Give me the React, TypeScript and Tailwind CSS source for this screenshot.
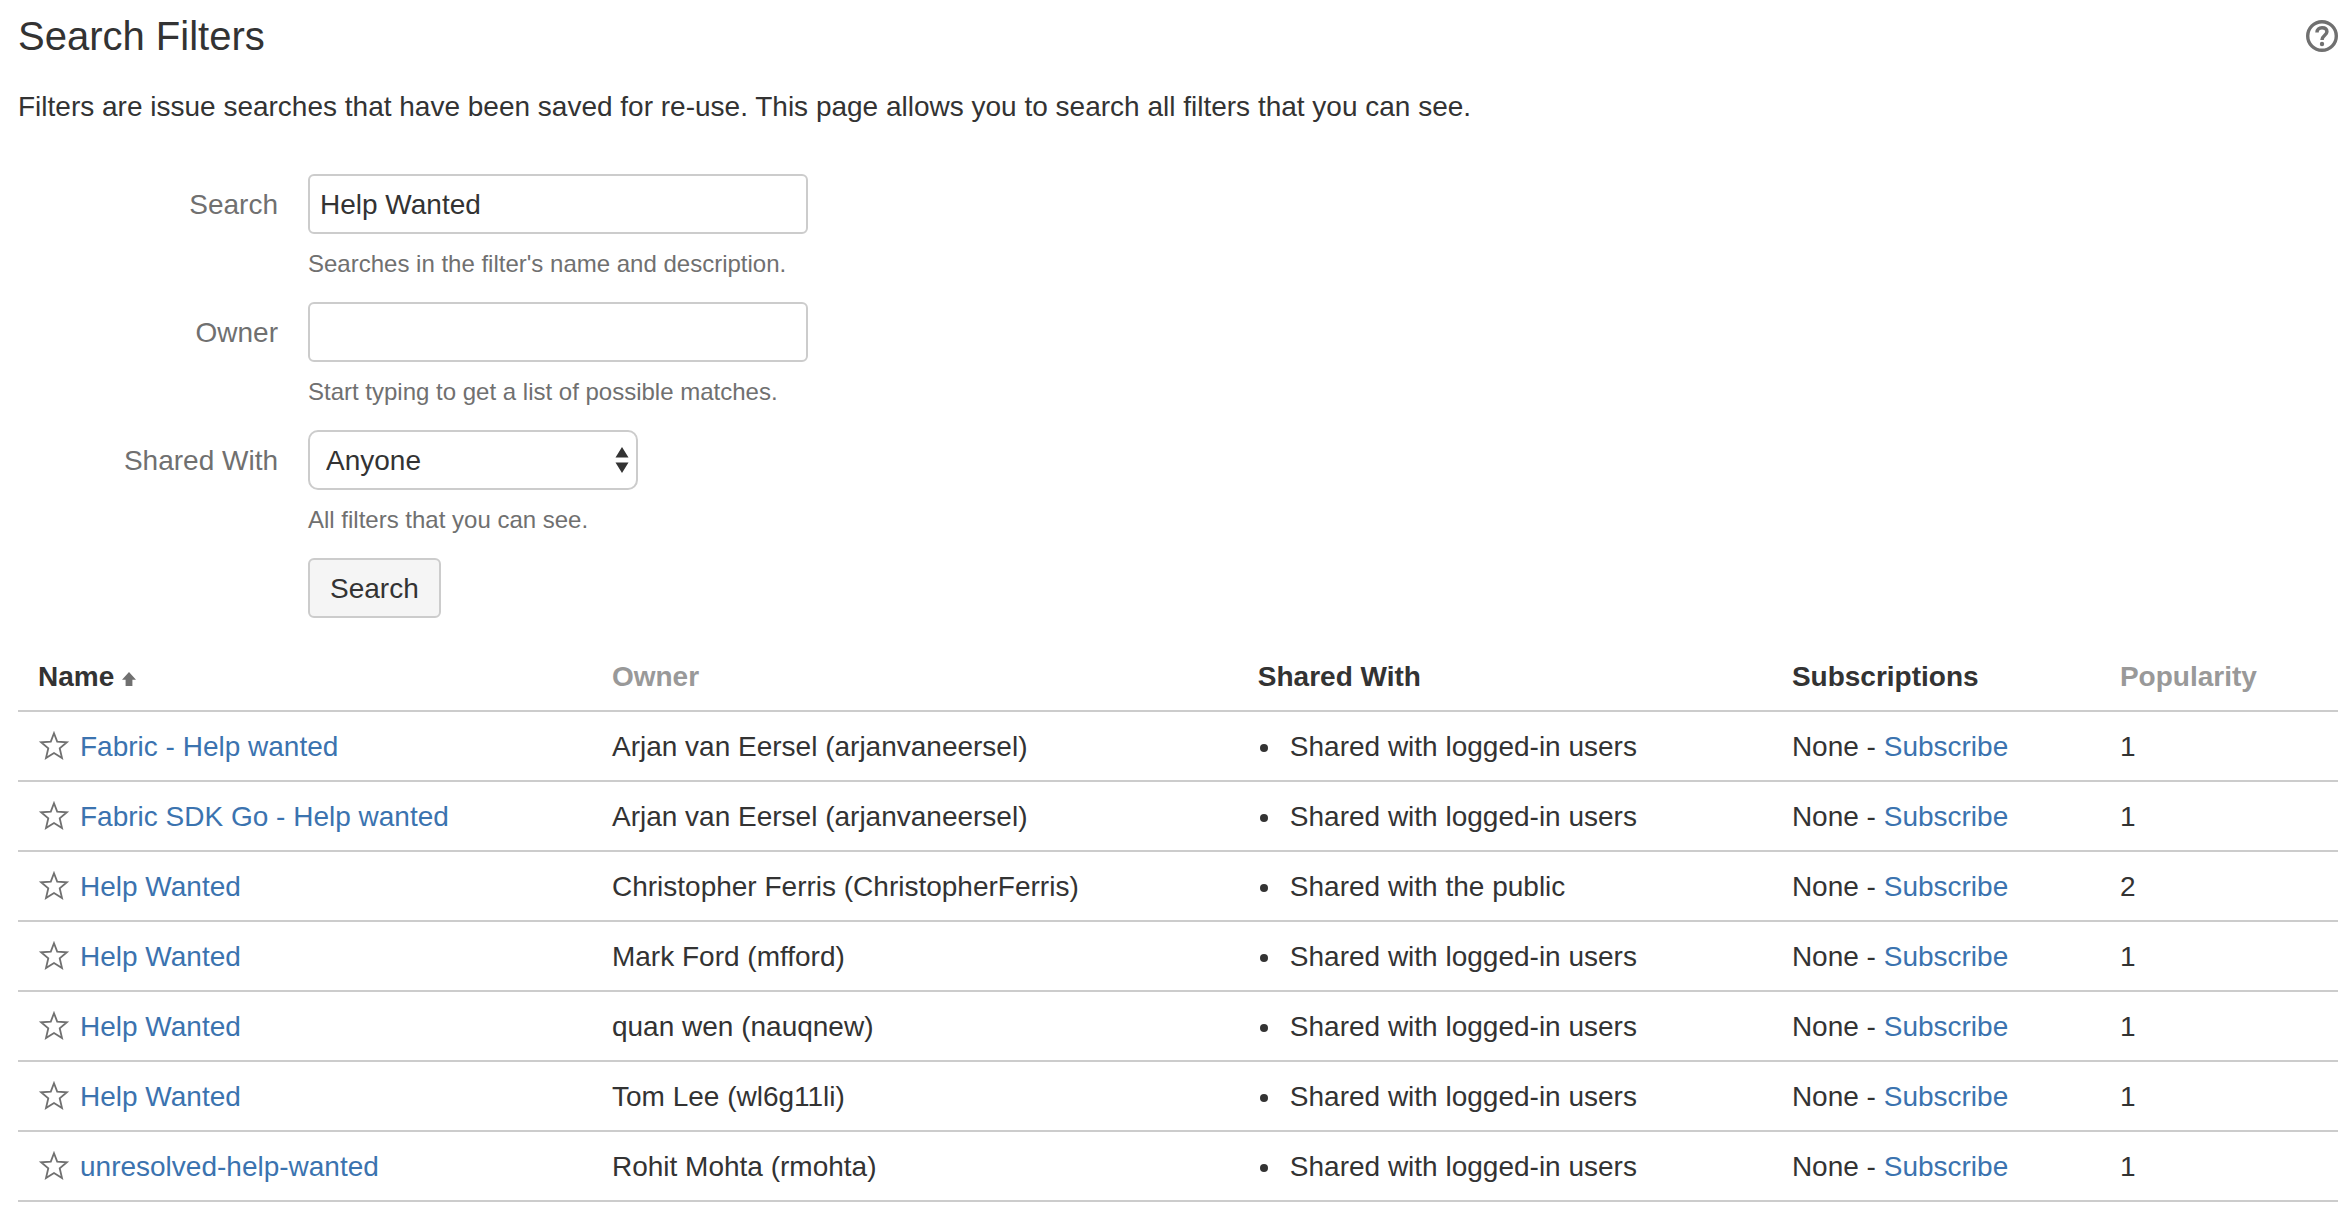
import { useState } from "react";
import type { ReactNode } from "react";

type Filter = {
  name: string;
  owner: string;
  shared: string;
  popularity: number;
};

const LOGGED_IN = "Shared with logged-in users";

const filters: Filter[] = [
  { name: "Fabric - Help wanted", owner: "Arjan van Eersel (arjanvaneersel)", shared: LOGGED_IN, popularity: 1 },
  { name: "Fabric SDK Go - Help wanted", owner: "Arjan van Eersel (arjanvaneersel)", shared: LOGGED_IN, popularity: 1 },
  { name: "Help Wanted", owner: "Christopher Ferris (ChristopherFerris)", shared: "Shared with the public", popularity: 2 },
  { name: "Help Wanted", owner: "Mark Ford (mfford)", shared: LOGGED_IN, popularity: 1 },
  { name: "Help Wanted", owner: "quan wen (nauqnew)", shared: LOGGED_IN, popularity: 1 },
  { name: "Help Wanted", owner: "Tom Lee (wl6g11li)", shared: LOGGED_IN, popularity: 1 },
  { name: "unresolved-help-wanted", owner: "Rohit Mohta (rmohta)", shared: LOGGED_IN, popularity: 1 },
];

function HelpIcon() {
  return (
    <svg viewBox="0 0 32 32" className="size-8" fill="none" stroke="#707070" aria-hidden="true">
      <circle cx="16" cy="16" r="14.3" strokeWidth="3.4" />
      <path d="M11 12.4C11 9.4 13 7.8 16 7.8C19 7.8 20.9 9.4 20.9 11.8C20.9 15.2 16 15.4 16 20" strokeWidth="3.5" />
      <circle cx="16" cy="24" r="2.2" fill="#707070" stroke="none" />
    </svg>
  );
}

function StarIcon() {
  return (
    <svg viewBox="0 0 32 32" className="size-8" fill="none" stroke="#707070" strokeWidth="1.8" aria-hidden="true">
      <path d="M16 2.2L19.2 10.6L28.9 11.3L21.7 17.3L24 27.1L16 22L8 27.1L10.3 17.3L3.1 11.3L12.8 10.6Z" />
    </svg>
  );
}

function SortUpIcon() {
  return (
    <svg viewBox="0 0 14 14" className="size-3.5" fill="#707070" aria-hidden="true">
      <path d="M7 0L14 7.7H10.4V14H3.6V7.7H0Z" />
    </svg>
  );
}

function Field({ id, label, hint, children }: { id: string; label: string; hint: string; children: ReactNode }) {
  return (
    <div className="mb-[18px] grid grid-cols-[260px_1fr] gap-x-[30px]">
      <label htmlFor={id} className="self-center pt-0.5 text-right text-[#707070]">
        {label}
      </label>
      <div className="flex">{children}</div>
      <p id={id + "-hint"} className="col-start-2 mt-2.5 text-2xl leading-10 text-[#707070]">
        {hint}
      </p>
    </div>
  );
}

export default function App() {
  const [query, setQuery] = useState("Help Wanted");
  const [owner, setOwner] = useState("");

  return (
    <main className="bg-white pt-3 pr-1.5 pb-6 pl-[18px] font-['Liberation_Sans',Arial,sans-serif] text-[28px] leading-10 text-[#333]">
      <header className="flex items-center justify-between">
        <h1 className="text-[40px] leading-[48px]">Search Filters</h1>
        <a href="#help" aria-label="Get help">
          <HelpIcon />
        </a>
      </header>
      <p className="mt-[27px]">
        Filters are issue searches that have been saved for re-use. This page allows you to search all filters that you
        can see.
      </p>

      <form className="mt-[47px]" onSubmit={(e) => e.preventDefault()}>
        <Field id="search-name" label="Search" hint="Searches in the filter's name and description.">
          <input
            id="search-name"
            aria-describedby="search-name-hint"
            value={query}
            onChange={(e) => setQuery(e.target.value)}
            className="h-15 w-full max-w-[500px] rounded-md border-2 border-[#ccc] px-2.5 pt-0.5"
          />
        </Field>
        <Field id="search-owner" label="Owner" hint="Start typing to get a list of possible matches.">
          <input
            id="search-owner"
            aria-describedby="search-owner-hint"
            value={owner}
            onChange={(e) => setOwner(e.target.value)}
            className="h-15 w-full max-w-[500px] rounded-md border-2 border-[#ccc] px-2.5 pt-0.5"
          />
        </Field>
        <Field id="search-share" label="Shared With" hint="All filters that you can see.">
          <div className="relative w-full max-w-[330px]">
            <select
              id="search-share"
              aria-describedby="search-share-hint"
              className="h-15 w-full appearance-none rounded-[10px] border-2 border-[#ccc] bg-white px-4 pt-0.5"
            >
              <option>Anyone</option>
            </select>
            <svg
              viewBox="0 0 14 26"
              className="pointer-events-none absolute top-[17px] right-[9px] h-[26px] w-3.5"
              fill="#333"
              aria-hidden="true"
            >
              <path d="M7 0L13.5 10.6H0.5ZM7 26L13.5 15.4H0.5Z" />
            </svg>
          </div>
        </Field>
        <div className="pl-[290px]">
          <button
            type="submit"
            className="block h-15 rounded-md border-2 border-[#ccc] bg-[#f5f5f5] px-5 pt-0.5"
          >
            Search
          </button>
        </div>
      </form>

      <table className="mt-6 w-full table-fixed border-collapse text-left">
        <thead>
          <tr className="border-b-2 border-[#ccc]">
            <th scope="col" aria-sort="ascending" className="w-[24.74%] px-5 pt-[15px] pb-[13px]">
              <button type="button" className="flex items-center gap-2">
                Name
                <span className="pt-1">
                  <SortUpIcon />
                </span>
              </button>
            </th>
            <th scope="col" className="w-[27.84%] px-5 pt-[15px] pb-[13px] text-[#999]">
              <button type="button" className="block">Owner</button>
            </th>
            <th scope="col" className="w-[23.02%] px-5 pt-[15px] pb-[13px]">Shared With</th>
            <th scope="col" className="w-[14.14%] px-5 pt-[15px] pb-[13px]">Subscriptions</th>
            <th scope="col" className="px-5 pt-[15px] pb-[13px] text-[#999]">
              <button type="button" className="block">Popularity</button>
            </th>
          </tr>
        </thead>
        <tbody>
          {filters.map((f, i) => (
            <tr key={i} className="border-b-2 border-[#ccc]">
              <td className="px-5 pt-[15px] pb-[13px]">
                <div className="flex items-center gap-2.5">
                  <button type="button" aria-label={"Add " + f.name + " to favourites"}>
                    <StarIcon />
                  </button>
                  <a href="#filter" className="text-[#3b73af]">{f.name}</a>
                </div>
              </td>
              <td className="px-5 pt-[15px] pb-[13px]">{f.owner}</td>
              <td className="px-5 pt-[15px] pb-[13px]">
                <ul>
                  <li className="flex items-center gap-[22px] pl-0.5 before:mt-0.5 before:size-2 before:rounded-full before:bg-[#333]">
                    {f.shared}
                  </li>
                </ul>
              </td>
              <td className="px-5 pt-[15px] pb-[13px]">
                None - <a href="#subscribe" className="text-[#3b73af]">Subscribe</a>
              </td>
              <td className="px-5 pt-[15px] pb-[13px]">{f.popularity}</td>
            </tr>
          ))}
        </tbody>
      </table>
    </main>
  );
}
